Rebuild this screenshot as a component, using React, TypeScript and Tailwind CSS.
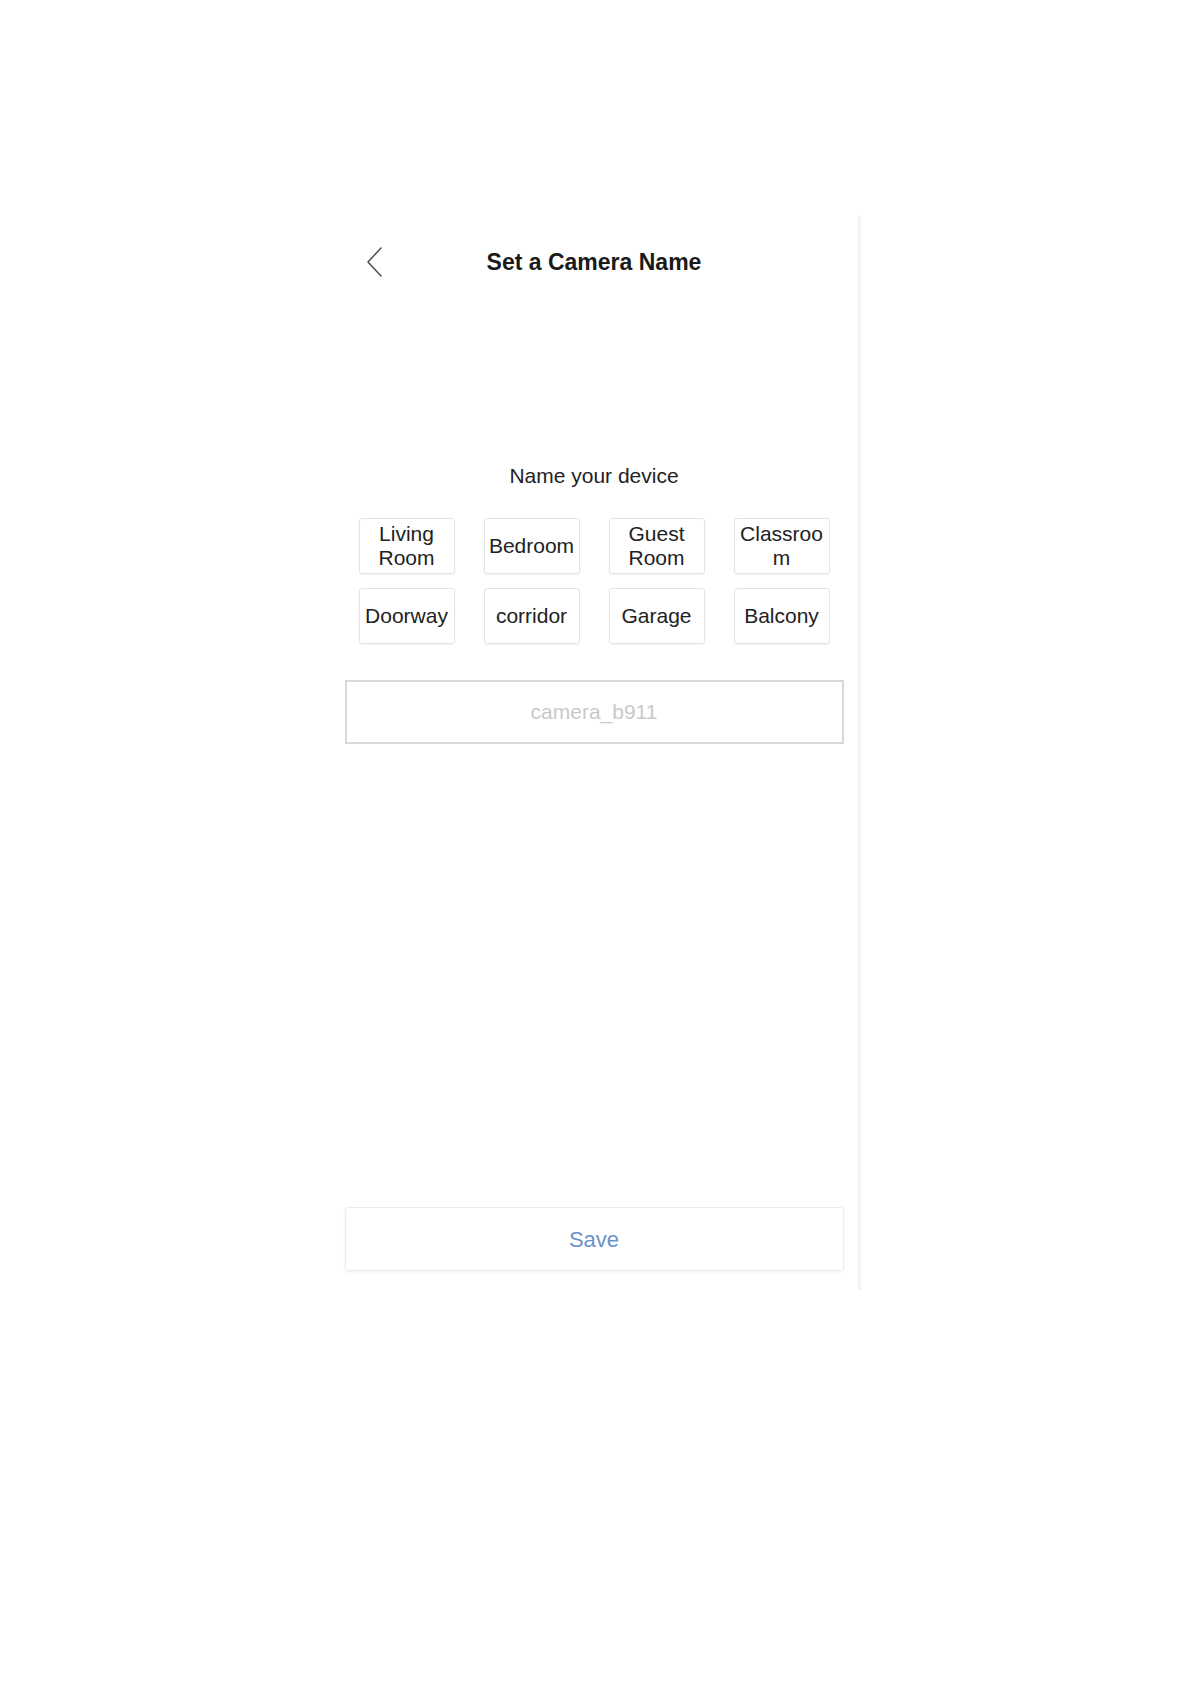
const rooms = [
  "Living Room",
  "Bedroom",
  "Guest Room",
  "Classroom",
  "Doorway",
  "corridor",
  "Garage",
  "Balcony",
];

export default function App() {
  return (
    <div className="min-h-screen w-full bg-white pt-[215px] font-['Liberation_Sans',Arial,sans-serif] text-[#222]">
      <div className="mx-auto flex h-[1075px] w-[530px] flex-col border-r-[3px] border-[#f4f4f4] px-[14px]">
        {/* Header */}
        <div className="relative flex h-[94px] items-center justify-center">
          <button className="absolute left-[20px] top-[31px] text-[#555]">
            <svg width="18" height="32" viewBox="0 0 18 32" fill="none">
              <path d="M16 2 L3 16 L16 30" stroke="currentColor" strokeWidth="1.6" strokeLinecap="round" strokeLinejoin="round" />
            </svg>
          </button>
          <h1 className="text-[23px] font-bold text-[#1a1a1a]">Set a Camera Name</h1>
        </div>

        {/* Body */}
        <p className="mt-[155px] text-center text-[21px] leading-[24px]">Name your device</p>

        <div className="mt-[30px] grid grid-cols-[repeat(4,96px)] gap-x-[29px] gap-y-[14px] px-[14px]">
          {rooms.map((r) => (
            <button
              key={r}
              className="flex h-[56px] items-center justify-center rounded-[3px] border border-[#e4e4e4] px-[3px] text-center text-[21px] leading-[24px] text-[#222] shadow-[0_1px_2px_rgba(0,0,0,0.06)] [overflow-wrap:anywhere]"
            >
              {r}
            </button>
          ))}
        </div>

        <input
          placeholder="camera_b911"
          className="mt-[36px] h-[64px] w-full border-2 border-[#d8d8d8] bg-white text-center text-[21px] text-[#333] outline-none placeholder:text-[#c9c9c9]"
        />

        <div className="flex-1" />

        <button className="mb-[19px] h-[64px] w-full rounded-[3px] border border-[#ececec] text-[22px] text-[#6b93c9] shadow-[0_1px_3px_rgba(0,0,0,0.06)]">
          Save
        </button>
      </div>
    </div>
  );
}
